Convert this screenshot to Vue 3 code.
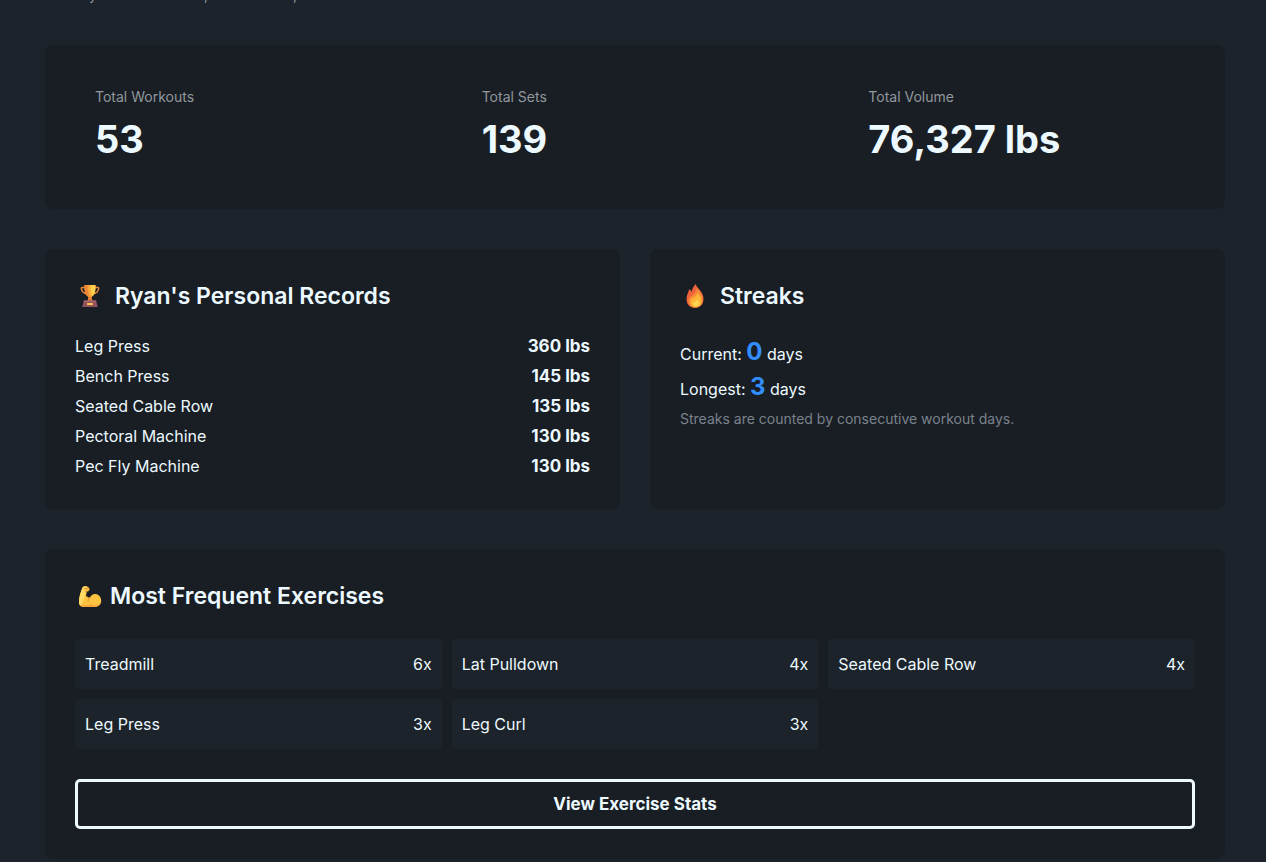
<script setup>
const stats = [
  { label: 'Total Workouts', value: '53' },
  { label: 'Total Sets', value: '139' },
  { label: 'Total Volume', value: '76,327 lbs' },
]
const records = [
  { name: 'Leg Press', weight: 360 },
  { name: 'Bench Press', weight: 145 },
  { name: 'Seated Cable Row', weight: 135 },
  { name: 'Pectoral Machine', weight: 130 },
  { name: 'Pec Fly Machine', weight: 130 },
]
const exercises = [
  { name: 'Treadmill', count: 6 },
  { name: 'Lat Pulldown', count: 4 },
  { name: 'Seated Cable Row', count: 4 },
  { name: 'Leg Press', count: 3 },
  { name: 'Leg Curl', count: 3 },
]
</script>

<template>
  <main class="page">
    <div class="intro"><span>y</span><span>,</span><span>,</span></div>

    <section class="card stats">
      <div v-for="s in stats" :key="s.label" class="stat">
        <div class="stat-label">{{ s.label }}</div>
        <div class="stat-value">{{ s.value }}</div>
      </div>
    </section>

    <div class="columns">
      <section class="card">
        <h2 class="title">
          <svg class="icon" viewBox="0 0 30 30" aria-hidden="true">
            <path d="M10 6.500H7.200c-.8 0-1 .6-.8 1.400C7 11 9 12.500 12 12.800M20 6.500h2.800c.8 0 1 .6.8 1.400C23 11 21 12.500 18 12.800" fill="none" stroke="#e8873c" stroke-width="1.500" />
            <path d="M9.500 4h11c.3 6.500-.9 10.500-4 12v4h-3v-4c-3.100-1.500-4.300-5.500-4-12z" fill="#f9a83a" />
            <path d="M15.500 4h5c.2 5.500-.8 9.500-3.500 11.300-1-2.800-1.500-7-1.500-11.300z" fill="#fdcf4e" />
            <path d="M9.500 4h3c.1 5 .8 9 2.500 12-4.500-1-5.800-6-5.500-12z" fill="#ee8537" />
            <path d="M13.500 16h3l1 4h-5z" fill="#e98237" />
            <path d="M9 19.500h12l1.800 6.500H7.200z" fill="#91515f" />
            <path d="M9 19.500h12l.4 1.500H8.600z" fill="#a8646d" />
            <rect x="12" y="22" width="6" height="2" rx=".5" fill="#fbc04e" />
          </svg>
          Ryan's Personal Records
        </h2>
        <ul class="records">
          <li v-for="r in records" :key="r.name">
            <span>{{ r.name }}</span><strong>{{ r.weight }} lbs</strong>
          </li>
        </ul>
      </section>

      <section class="card">
        <h2 class="title">
          <svg class="icon" viewBox="0 0 30 30" aria-hidden="true">
            <path d="M15.500 3c.8 2.800 2.800 4 4.500 6.200 2 2.500 3.500 5.300 3.500 8.800 0 5.500-3.500 9-8.500 9S6.500 23.500 6.500 18c0-4.200 2-6 2.500-9.500 1.500.3 2.200 1.200 2.700 2.500C12 8 13.500 5.500 15.500 3z" fill="#ed643c" />
            <path d="M16.800 7c2.200 3 5.900 6 5.900 11.200 0 5-3.200 8.300-7.500 8.300-4 0-6.700-2.500-6.700-6.500 0-3.500 2.500-4.500 5-6.500 2-1.800 3-3.800 3.300-6.500z" fill="#f88b36" />
            <path d="M17 12c3 2.500 4.500 4.500 4.500 8 0 4-2.700 6-5.700 6-3.300 0-5.300-2-5.300-5 0-2.500 1.500-3.700 3.200-4.500 2-.9 3-2 3.300-4.500z" fill="#fdb638" />
            <path d="M16.800 18.500c2 1.200 2.700 2.500 2.700 4 0 2-1.500 3-3.500 3s-3.300-1-3.300-2.500c0-2 3.100-2 4.100-4.500z" fill="#fed64e" />
          </svg>
          Streaks
        </h2>
        <div class="streaks">
          <p class="streak">Current: <strong>0</strong> days</p>
          <p class="streak">Longest: <strong>3</strong> days</p>
          <p class="note">Streaks are counted by consecutive workout days.</p>
        </div>
      </section>
    </div>

    <section class="card">
      <h2 class="title tight">
        <svg class="icon" viewBox="0 0 30 30" aria-hidden="true">
          <path d="M7.500 6.500c1-1.200 3-1.700 4.500-1 1.500.5 2.800 1.500 2.500 3-.2 1.300-1.300 2-2.700 1.900l-.8 4.600c1.500 1 3 1.800 4 1.500 1.300-2.800 3.500-4 5.800-3.500 3.500.7 5.400 3.500 5.400 6.800 0 4.200-3 6-6.500 6.200H9.500C5.500 26 4 24 4 21c0-5 1.500-9.500 3.500-14.500z" fill="#fcc340" />
          <path d="M7.500 6.500c1-1.200 3-1.700 4.500-1l-2 2c1 1 1 2 .7 3.500L8.500 19 6 25C4.500 24 4 22.800 4 21c0-5 1.500-9.500 3.500-14.500z" fill="#ffda67" />
          <path d="M5 23.500c3 1.500 8 .8 10.500-.2 3.500 2 7.500 1.200 10-1.300-1.200 3-3.500 3.900-5.800 4H9.500c-2 0-3.600-.8-4.500-2.500z" fill="#f5a53a" />
          <path d="M15 16.500c-1.500.7-2 2-2 3.500M9 7.800c1.500-.7 3 .2 4.500 0M10.500 10.500l1.500-.1" fill="none" stroke="#e78b35" stroke-width="1" stroke-linecap="round" />
        </svg>
        Most Frequent Exercises
      </h2>
      <ul class="exercises">
        <li v-for="e in exercises" :key="e.name">
          <span>{{ e.name }}</span><span>{{ e.count }}x</span>
        </li>
      </ul>
      <button class="more" type="button">View Exercise Stats</button>
    </section>
  </main>
</template>

<style>
body {
  margin: 0;
  background: #1d232a;
}
</style>

<style scoped>
.page {
  box-sizing: border-box;
  padding: 0 41px 3px 45px;
  display: flex;
  flex-direction: column;
  gap: 40px;
  color: #ecf9ff;
  font-family: Inter, "Liberation Sans", sans-serif;
  font-size: 16px;
  line-height: 30px;
}
.intro {
  display: flex;
  align-items: flex-end;
  height: 5px;
  overflow: hidden;
  padding-left: 44px;
  color: #8d969c;
  font-size: 14px;
  line-height: 20px;
}
.intro span:first-child {
  width: 115px;
}
.intro span:nth-child(2) {
  width: 89px;
}
.card {
  box-sizing: border-box;
  padding: 30px;
  border-radius: 8px;
  background: #191e24;
}
.stats {
  display: grid;
  grid-template-columns: repeat(3, 1fr);
  gap: 40px;
}
.stat {
  padding: 10px 20px;
}
.stat-label {
  color: #90979d;
  font-size: 14px;
  line-height: 24px;
}
.stat-value {
  font-size: 38px;
  font-weight: 700;
  line-height: 60px;
}
.columns {
  display: grid;
  grid-template-columns: 1fr 1fr;
  gap: 30px;
}
.columns .card {
  padding-bottom: 28px;
}
.title {
  display: flex;
  align-items: center;
  gap: 10px;
  margin: 0 0 18px;
  font-size: 23px;
  font-weight: 600;
  line-height: 34px;
}
.title.tight {
  gap: 5px;
  margin-bottom: 26px;
}
.icon {
  width: 30px;
  height: 30px;
}
ul {
  margin: 0;
  padding: 0;
  list-style: none;
}
.records li {
  display: flex;
  justify-content: space-between;
}
.records strong {
  font-size: 17px;
}
.streaks {
  padding-top: 6px;
}
.streak {
  margin: 0;
  line-height: 35px;
}
.streak strong {
  color: #328eff;
  font-size: 24px;
  line-height: 24px;
}
.note {
  margin: 0;
  color: #7a828c;
  font-size: 14px;
  line-height: 24px;
}
.exercises {
  display: grid;
  grid-template-columns: repeat(3, 1fr);
  gap: 10px;
}
.exercises li {
  display: flex;
  justify-content: space-between;
  padding: 10px;
  border-radius: 4px;
  background: #1d232a;
}
.more {
  display: block;
  box-sizing: border-box;
  width: 100%;
  height: 50px;
  margin-top: 30px;
  border: 3px solid #ecf9ff;
  border-radius: 5px;
  background: transparent;
  color: inherit;
  font: inherit;
  font-size: 17px;
  font-weight: 700;
}
</style>
